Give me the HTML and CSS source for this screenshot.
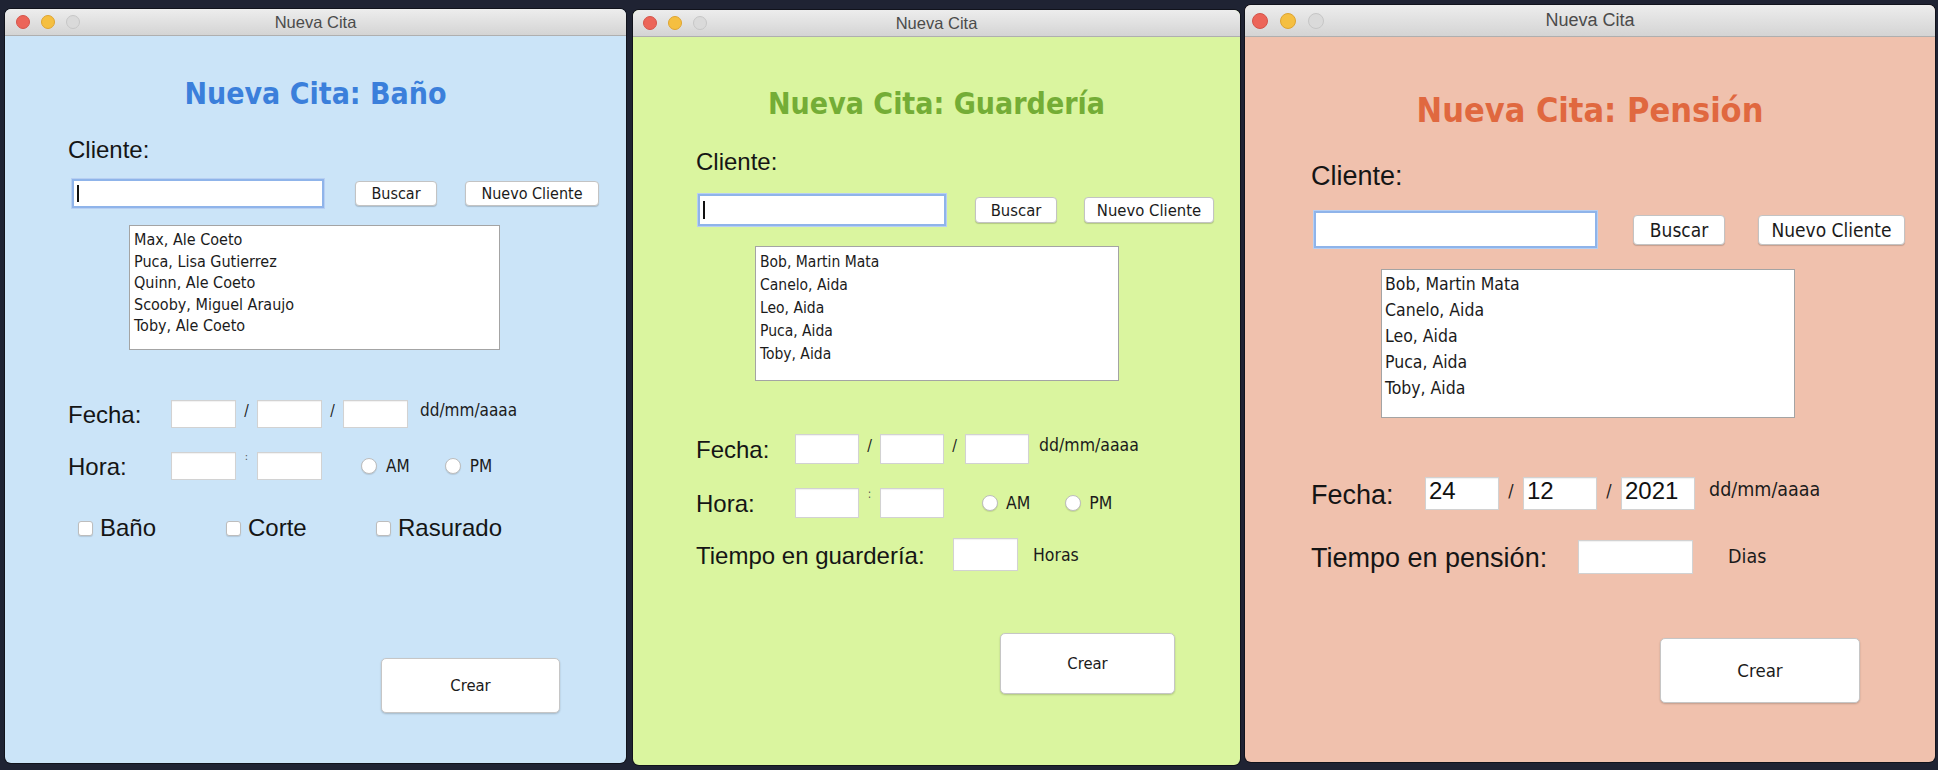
FILE: index.html
```html
<!DOCTYPE html>
<html lang="es">
<head>
<meta charset="utf-8">
<title>Nueva Cita</title>
<link rel="stylesheet" href="styles.css">
</head>
<body>
  <!-- Ventana 1: Baño -->
  <div class="win win-bano">
    <div class="titlebar">
      <div class="lights"><i class="light red"></i><i class="light yellow"></i><i class="light grey"></i></div>
      <div class="wtitle">Nueva Cita</div>
      <div></div>
    </div>
    <div class="content">
      <h1 class="heading">Nueva Cita: Baño</h1>
      <div class="cliente">Cliente:</div>
      <div class="search">
        <div class="field focus"><span class="caret"></span></div>
        <button class="btn b1">Buscar</button>
        <button class="btn b2">Nuevo Cliente</button>
      </div>
      <ul class="list">
        <li>Max, Ale Coeto</li>
        <li>Puca, Lisa Gutierrez</li>
        <li>Quinn, Ale Coeto</li>
        <li>Scooby, Miguel Araujo</li>
        <li>Toby, Ale Coeto</li>
      </ul>
      <div class="row fecha">
        <span class="lbl">Fecha:</span>
        <span class="box"></span><span class="sep">/</span><span class="box"></span><span class="sep">/</span><span class="box"></span>
        <span class="hint">dd/mm/aaaa</span>
      </div>
      <div class="row hora">
        <span class="lbl">Hora:</span>
        <span class="box"></span><span class="sep colon">:</span><span class="box"></span>
        <span class="radio am"><i class="dot"></i>AM</span>
        <span class="radio pm"><i class="dot"></i>PM</span>
      </div>
      <div class="checks">
        <span class="chk"><i class="cb"></i>Baño</span>
        <span class="chk"><i class="cb"></i>Corte</span>
        <span class="chk"><i class="cb"></i>Rasurado</span>
      </div>
      <button class="crear">Crear</button>
    </div>
  </div>

  <!-- Ventana 2: Guardería -->
  <div class="win win-guard">
    <div class="titlebar">
      <div class="lights"><i class="light red"></i><i class="light yellow"></i><i class="light grey"></i></div>
      <div class="wtitle">Nueva Cita</div>
      <div></div>
    </div>
    <div class="content">
      <h1 class="heading">Nueva Cita: Guardería</h1>
      <div class="cliente">Cliente:</div>
      <div class="search">
        <div class="field focus"><span class="caret"></span></div>
        <button class="btn b1">Buscar</button>
        <button class="btn b2">Nuevo Cliente</button>
      </div>
      <ul class="list">
        <li>Bob, Martin Mata</li>
        <li>Canelo, Aida</li>
        <li>Leo, Aida</li>
        <li>Puca, Aida</li>
        <li>Toby, Aida</li>
      </ul>
      <div class="row fecha">
        <span class="lbl">Fecha:</span>
        <span class="box"></span><span class="sep">/</span><span class="box"></span><span class="sep">/</span><span class="box"></span>
        <span class="hint">dd/mm/aaaa</span>
      </div>
      <div class="row hora">
        <span class="lbl">Hora:</span>
        <span class="box"></span><span class="sep colon">:</span><span class="box"></span>
        <span class="radio am"><i class="dot"></i>AM</span>
        <span class="radio pm"><i class="dot"></i>PM</span>
      </div>
      <div class="row tiempo">
        <span class="lbl">Tiempo en guardería:</span>
        <span class="box tbox"></span>
        <span class="unit">Horas</span>
      </div>
      <button class="crear">Crear</button>
    </div>
  </div>

  <!-- Ventana 3: Pensión -->
  <div class="win win-pension">
    <div class="titlebar">
      <div class="lights"><i class="light red"></i><i class="light yellow"></i><i class="light grey"></i></div>
      <div class="wtitle">Nueva Cita</div>
      <div></div>
    </div>
    <div class="content">
      <h1 class="heading">Nueva Cita: Pensión</h1>
      <div class="cliente">Cliente:</div>
      <div class="search">
        <div class="field focus"></div>
        <button class="btn b1">Buscar</button>
        <button class="btn b2">Nuevo Cliente</button>
      </div>
      <ul class="list">
        <li>Bob, Martin Mata</li>
        <li>Canelo, Aida</li>
        <li>Leo, Aida</li>
        <li>Puca, Aida</li>
        <li>Toby, Aida</li>
      </ul>
      <div class="row fecha">
        <span class="lbl">Fecha:</span>
        <span class="box val">24</span><span class="sep">/</span><span class="box val">12</span><span class="sep">/</span><span class="box val">2021</span>
        <span class="hint">dd/mm/aaaa</span>
      </div>
      <div class="row tiempo">
        <span class="lbl">Tiempo en pensión:</span>
        <span class="box tbox"></span>
        <span class="unit">Dias</span>
      </div>
      <button class="crear">Crear</button>
    </div>
  </div>
</body>
</html>
```

FILE: styles.css
```css
* { box-sizing: border-box; }
html, body { margin: 0; padding: 0; }

body {
  width: 1938px;
  height: 770px;
  overflow: hidden;
  background: #1f2333;
  display: flex;
  align-items: flex-start;
  font-family: "Liberation Sans", Arial, sans-serif;
  color: #151515;
}

/* ---------- per-window metrics ---------- */
.win-bano {
  --win-w: 621px; --win-h: 754px; --win-mt: 9px; --win-ml: 5px;
  --bg: #cbe4f8; --accent: #3b7fdb;
  --tb-h: 27px; --tb-fs: 16.5px; --dot: 14px; --dot-gap: 11px; --dot-l: 11px;
  --h1-mt: 40px; --h1-fs: 30px; --h1-lh: 36px;
  --pad: 63px; --lbl-fs: 24px; --lbl-lh: 28px; --cl-mt: 24px;
  --sr-mt: 15px; --fld-l: 67px; --fld-w: 252px; --fld-h: 29px;
  --b1-ml: 31px; --b1-w: 82px; --b2-ml: 28px; --b2-w: 134px; --btn-h: 25px; --btn-fs: 16px;
  --ls-mt: 17px; --ls-l: 124px; --ls-w: 371px; --ls-h: 125px; --ls-fs: 16px; --ls-lh: 21.6px; --ls-pt: 3px; --ls-pl: 4px;
  --fe-mt: 48px; --lblcol: 103px; --box-w: 65px; --box-h: 28px; --sep-w: 21px; --hint-ml: 12px; --sm-fs: 17px;
  --ho-mt: 21px; --rad-ml: 39px; --rad: 16px; --rad-gap: 9px; --rad2-ml: 35px;
  --ti-mt: 22px; --tlbl: 257px; --tbox-w: 65px; --tbox-h: 33px; --unit-ml: 15px;
  --cr-mt: 116px; --cr-l: 376px; --cr-w: 179px; --cr-h: 55px; --cr-fs: 16.5px;
}
.win-guard {
  --win-w: 607px; --win-h: 755px; --win-mt: 10px; --win-ml: 7px;
  --bg: #daf59f; --accent: #74ad36;
  --tb-h: 27px; --tb-fs: 16.5px; --dot: 14px; --dot-gap: 11px; --dot-l: 10px;
  --h1-mt: 49px; --h1-fs: 30px; --h1-lh: 36px;
  --pad: 63px; --lbl-fs: 24px; --lbl-lh: 28px; --cl-mt: 26px;
  --sr-mt: 18px; --fld-l: 65px; --fld-w: 248px; --fld-h: 32px;
  --b1-ml: 29px; --b1-w: 82px; --b2-ml: 27px; --b2-w: 130px; --btn-h: 26px; --btn-fs: 16.5px;
  --ls-mt: 20px; --ls-l: 122px; --ls-w: 364px; --ls-h: 135px; --ls-fs: 15.5px; --ls-lh: 23px; --ls-pt: 3.5px; --ls-pl: 4px;
  --fe-mt: 52px; --lblcol: 99px; --box-w: 64px; --box-h: 30px; --sep-w: 21px; --hint-ml: 10px; --sm-fs: 17.5px;
  --ho-mt: 23px; --rad-ml: 38px; --rad: 16px; --rad-gap: 8px; --rad2-ml: 35px;
  --ti-mt: 20px; --tlbl: 257px; --tbox-w: 65px; --tbox-h: 33px; --unit-ml: 15px;
  --cr-mt: 62px; --cr-l: 367px; --cr-w: 175px; --cr-h: 61px; --cr-fs: 16.5px;
}
.win-pension {
  --win-w: 690px; --win-h: 757px; --win-mt: 5px; --win-ml: 5px;
  --bg: #f0c1ad; --accent: #e0683f;
  --tb-h: 32px; --tb-fs: 18px; --dot: 16px; --dot-gap: 12px; --dot-l: 7px;
  --h1-mt: 53px; --h1-fs: 34px; --h1-lh: 40px;
  --pad: 66px; --lbl-fs: 27px; --lbl-lh: 32px; --cl-mt: 30px;
  --sr-mt: 19px; --fld-l: 69px; --fld-w: 283px; --fld-h: 37px;
  --b1-ml: 36px; --b1-w: 92px; --b2-ml: 33px; --b2-w: 147px; --btn-h: 30px; --btn-fs: 19px;
  --ls-mt: 21px; --ls-l: 136px; --ls-w: 414px; --ls-h: 149px; --ls-fs: 17.5px; --ls-lh: 26px; --ls-pt: 1px; --ls-pl: 3px;
  --fe-mt: 58px; --lblcol: 114px; --box-w: 74px; --box-h: 33px; --sep-w: 24px; --hint-ml: 14px; --sm-fs: 19.5px;
  --ti-mt: 28px; --tlbl: 267px; --tbox-w: 115px; --tbox-h: 34px; --unit-ml: 35px;
  --cr-mt: 64px; --cr-l: 415px; --cr-w: 200px; --cr-h: 65px; --cr-fs: 18.5px;
}

/* ---------- window chrome ---------- */
.win {
  flex: none;
  width: var(--win-w);
  height: var(--win-h);
  margin-top: var(--win-mt);
  margin-left: var(--win-ml);
  background: var(--bg);
  border-radius: 6px;
  overflow: hidden;
  display: flex;
  flex-direction: column;
  box-shadow: 0 0 0 1px rgba(0, 0, 0, 0.45);
}

.titlebar {
  flex: none;
  height: var(--tb-h);
  background: linear-gradient(#ededed, #d4d4d4);
  border-bottom: 1px solid #afafaf;
  display: grid;
  grid-template-columns: 1fr auto 1fr;
  align-items: center;
}
.lights {
  display: flex;
  gap: var(--dot-gap);
  padding-left: var(--dot-l);
}
.light {
  display: block;
  width: var(--dot);
  height: var(--dot);
  border-radius: 50%;
}
.light.red { background: #ec6559; border: 1px solid #d4544a; }
.light.yellow { background: #f5bf41; border: 1px solid #dea431; }
.light.grey { background: #dadada; border: 1px solid #c6c6c6; }
.wtitle {
  font-size: var(--tb-fs);
  color: #4b4b4b;
}

/* ---------- content ---------- */
.content {
  flex: 1;
  display: flex;
  flex-direction: column;
  align-items: flex-start;
}

.heading {
  align-self: stretch;
  margin: var(--h1-mt) 0 0;
  text-align: center;
  font-family: "DejaVu Sans Condensed", "DejaVu Sans", sans-serif;
  font-stretch: condensed;
  font-weight: bold;
  font-size: var(--h1-fs);
  line-height: var(--h1-lh);
  color: var(--accent);
}

.cliente {
  margin: var(--cl-mt) 0 0 var(--pad);
  font-size: var(--lbl-fs);
  line-height: var(--lbl-lh);
}

.search {
  display: flex;
  align-items: center;
  margin: var(--sr-mt) 0 0 var(--fld-l);
}
.field {
  width: var(--fld-w);
  height: var(--fld-h);
  background: #fff;
  display: flex;
  align-items: center;
  padding-left: 3px;
}
.field.focus {
  border: 2px solid #8fb4ea;
  box-shadow: 0 0 0 1px #b7cff2;
}
.caret {
  display: block;
  width: 2px;
  height: 66%;
  background: #111;
}
.btn {
  height: var(--btn-h);
  padding: 0;
  background: #fff;
  border: 1px solid #c3c3c3;
  border-radius: 4px;
  box-shadow: 0 1px 1px rgba(0, 0, 0, 0.18);
  font-family: "DejaVu Sans Condensed", "DejaVu Sans", sans-serif;
  font-stretch: condensed;
  font-size: var(--btn-fs);
  color: #1b1b1b;
}
.b1 { width: var(--b1-w); margin-left: var(--b1-ml); }
.b2 { width: var(--b2-w); margin-left: var(--b2-ml); }

.list {
  list-style: none;
  margin: var(--ls-mt) 0 0 var(--ls-l);
  width: var(--ls-w);
  height: var(--ls-h);
  padding: var(--ls-pt) 0 0 var(--ls-pl);
  background: #fff;
  border: 1px solid #a4a4a4;
  font-family: "DejaVu Sans Condensed", "DejaVu Sans", sans-serif;
  font-stretch: condensed;
  font-size: var(--ls-fs);
  line-height: var(--ls-lh);
  color: #1b1b1b;
}

/* form rows */
.row {
  display: flex;
  align-items: center;
  margin-left: var(--pad);
}
.row .lbl {
  flex: none;
  width: var(--lblcol);
  font-size: var(--lbl-fs);
  line-height: var(--lbl-lh);
  padding-top: 3px;
}
.fecha { margin-top: var(--fe-mt); }
.hora { margin-top: var(--ho-mt); }
.tiempo { margin-top: var(--ti-mt); }
.tiempo .lbl { width: var(--tlbl); }

.box {
  flex: none;
  width: var(--box-w);
  height: var(--box-h);
  background: #fff;
  border: 1px solid #d2d2d2;
  box-shadow: inset 0 1px 1px rgba(0, 0, 0, 0.06);
}
.box.val {
  font-size: 24px;
  line-height: 26px;
  padding-left: 3px;
  color: #111;
}
.tbox { width: var(--tbox-w); height: var(--tbox-h); }

.sep, .hint, .radio, .unit {
  font-family: "DejaVu Sans Condensed", "DejaVu Sans", sans-serif;
  font-stretch: condensed;
  font-size: var(--sm-fs);
  color: #1b1b1b;
}
.sep {
  flex: none;
  width: var(--sep-w);
  text-align: center;
  font-size: calc(var(--sm-fs) - 2px);
  padding-bottom: 5px;
}
.colon { align-self: flex-start; padding-bottom: 0; font-size: calc(var(--sm-fs) - 6px); color: #555; }
.hint { margin-left: var(--hint-ml); margin-top: -8px; }
.unit { margin-left: var(--unit-ml); }

.radio {
  display: flex;
  align-items: center;
  gap: var(--rad-gap);
}
.radio.am { margin-left: var(--rad-ml); }
.radio.pm { margin-left: var(--rad2-ml); }
.dot {
  display: block;
  width: var(--rad);
  height: var(--rad);
  border-radius: 50%;
  background: #fff;
  border: 1px solid #bdbdbd;
  box-shadow: 0 1px 1px rgba(0, 0, 0, 0.12);
}

.checks {
  display: grid;
  grid-template-columns: 148px 150px auto;
  margin: 33px 0 0 73px;
  height: 28px;
  align-items: center;
}
.chk {
  display: flex;
  align-items: center;
  gap: 7px;
  font-size: 24px;
}
.cb {
  display: block;
  width: 15px;
  height: 15px;
  border-radius: 3px;
  background: #fff;
  border: 1px solid #bdbdbd;
  box-shadow: 0 1px 1px rgba(0, 0, 0, 0.12);
}

.crear {
  margin: var(--cr-mt) 0 0 var(--cr-l);
  width: var(--cr-w);
  height: var(--cr-h);
  padding: 0;
  background: #fff;
  border: 1px solid #c6c6c6;
  border-radius: 5px;
  box-shadow: 0 1px 2px rgba(0, 0, 0, 0.2);
  font-family: "DejaVu Sans Condensed", "DejaVu Sans", sans-serif;
  font-stretch: condensed;
  font-size: var(--cr-fs);
  color: #1b1b1b;
}
```
